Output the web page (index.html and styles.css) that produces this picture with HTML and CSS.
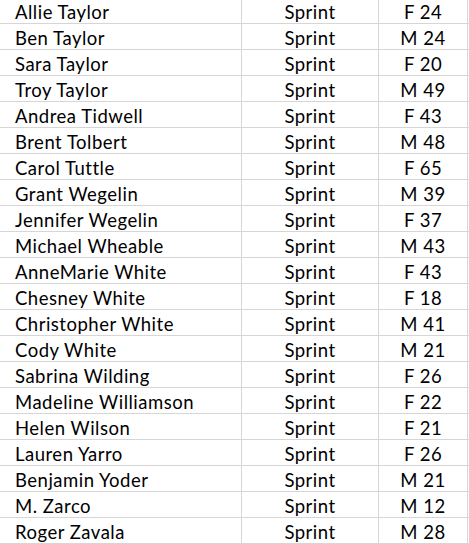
FILE: index.html
```html
<!DOCTYPE html>
<html>
<head>
<meta charset="utf-8">
<link rel="stylesheet" href="styles.css">
</head>
<body>
<div class="sheet">
  <div class="row"><div class="c name">Allie Taylor</div><div class="c mid">Sprint</div><div class="c mid">F 24</div><div class="c rest"></div></div>
  <div class="row"><div class="c name">Ben Taylor</div><div class="c mid">Sprint</div><div class="c mid">M 24</div><div class="c rest"></div></div>
  <div class="row"><div class="c name">Sara Taylor</div><div class="c mid">Sprint</div><div class="c mid">F 20</div><div class="c rest"></div></div>
  <div class="row"><div class="c name">Troy Taylor</div><div class="c mid">Sprint</div><div class="c mid">M 49</div><div class="c rest"></div></div>
  <div class="row"><div class="c name">Andrea Tidwell</div><div class="c mid">Sprint</div><div class="c mid">F 43</div><div class="c rest"></div></div>
  <div class="row"><div class="c name">Brent Tolbert</div><div class="c mid">Sprint</div><div class="c mid">M 48</div><div class="c rest"></div></div>
  <div class="row"><div class="c name">Carol Tuttle</div><div class="c mid">Sprint</div><div class="c mid">F 65</div><div class="c rest"></div></div>
  <div class="row"><div class="c name">Grant Wegelin</div><div class="c mid">Sprint</div><div class="c mid">M 39</div><div class="c rest"></div></div>
  <div class="row"><div class="c name">Jennifer Wegelin</div><div class="c mid">Sprint</div><div class="c mid">F 37</div><div class="c rest"></div></div>
  <div class="row"><div class="c name">Michael Wheable</div><div class="c mid">Sprint</div><div class="c mid">M 43</div><div class="c rest"></div></div>
  <div class="row"><div class="c name">AnneMarie White</div><div class="c mid">Sprint</div><div class="c mid">F 43</div><div class="c rest"></div></div>
  <div class="row"><div class="c name">Chesney White</div><div class="c mid">Sprint</div><div class="c mid">F 18</div><div class="c rest"></div></div>
  <div class="row"><div class="c name">Christopher White</div><div class="c mid">Sprint</div><div class="c mid">M 41</div><div class="c rest"></div></div>
  <div class="row"><div class="c name">Cody White</div><div class="c mid">Sprint</div><div class="c mid">M 21</div><div class="c rest"></div></div>
  <div class="row"><div class="c name">Sabrina Wilding</div><div class="c mid">Sprint</div><div class="c mid">F 26</div><div class="c rest"></div></div>
  <div class="row"><div class="c name">Madeline Williamson</div><div class="c mid">Sprint</div><div class="c mid">F 22</div><div class="c rest"></div></div>
  <div class="row"><div class="c name">Helen Wilson</div><div class="c mid">Sprint</div><div class="c mid">F 21</div><div class="c rest"></div></div>
  <div class="row"><div class="c name">Lauren Yarro</div><div class="c mid">Sprint</div><div class="c mid">F 26</div><div class="c rest"></div></div>
  <div class="row"><div class="c name">Benjamin Yoder</div><div class="c mid">Sprint</div><div class="c mid">M 21</div><div class="c rest"></div></div>
  <div class="row"><div class="c name">M. Zarco</div><div class="c mid">Sprint</div><div class="c mid">M 12</div><div class="c rest"></div></div>
  <div class="row"><div class="c name">Roger Zavala</div><div class="c mid">Sprint</div><div class="c mid">M 28</div><div class="c rest"></div></div>
</div>
</body>
</html>
```

FILE: styles.css
```css
html, body {
  margin: 0;
  padding: 0;
  background: #ffffff;
  overflow: hidden;
}
.sheet {
  margin-top: -2px;
  width: 469px;
  font-family: Lato, "Liberation Sans", sans-serif;
  font-size: 18.5px;
  letter-spacing: 0.5px;
  color: #000000;
}
.row {
  display: grid;
  grid-template-columns: 242px 137px 89px 1fr;
  height: 26px;
  box-sizing: border-box;
  border-bottom: 1px solid #d6d6d6;
}
.c {
  display: flex;
  align-items: flex-end;
  line-height: 20px;
  padding-bottom: 1px;
  box-sizing: border-box;
  border-right: 1px solid #d6d6d6;
  white-space: nowrap;
}
.name {
  padding-left: 15px;
}
.mid {
  justify-content: center;
}
.rest {
  border-right: none;
}
```
